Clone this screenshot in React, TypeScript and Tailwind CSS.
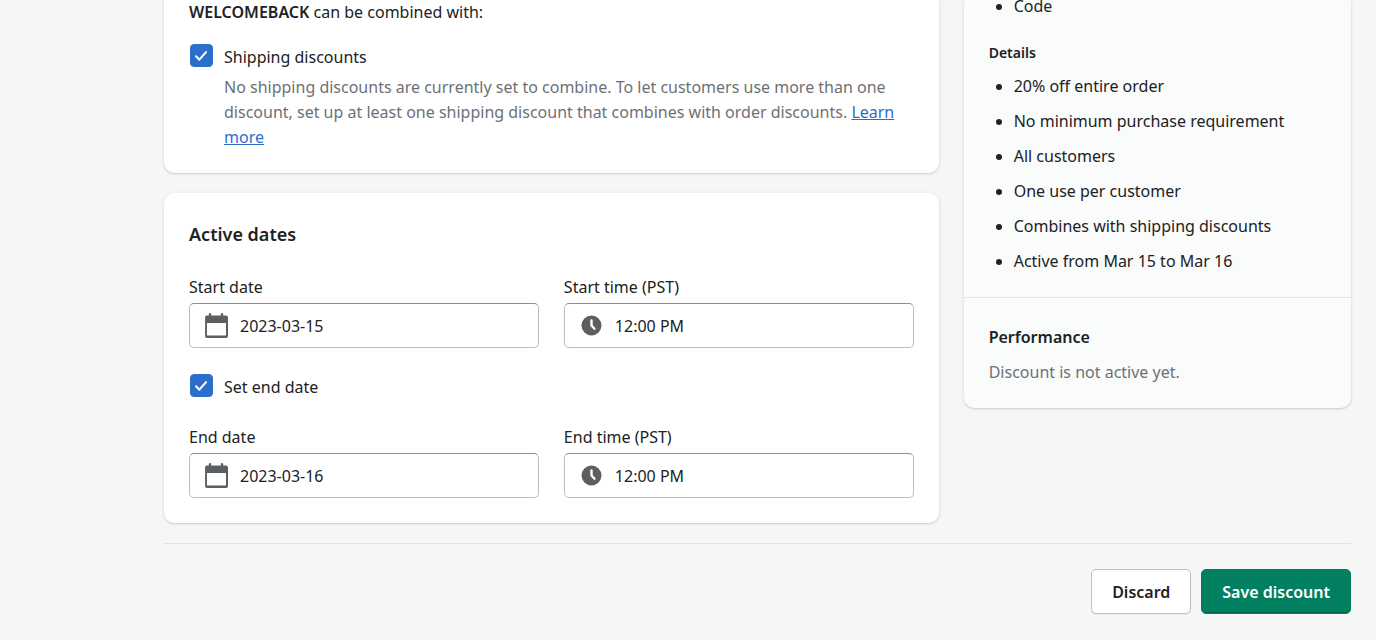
import React, { useState } from "react";

const details = [
  "20% off entire order",
  "No minimum purchase requirement",
  "All customers",
  "One use per customer",
  "Combines with shipping discounts",
  "Active from Mar 15 to Mar 16",
];

const cardShadow = "shadow-[0_0_5px_rgba(23,24,24,0.05),0_1px_2px_rgba(0,0,0,0.15)]";

function CalendarIcon() {
  return (
    <svg width="25" height="25" viewBox="0 0 25 25" fill="#5c5f62" aria-hidden="true">
      <path fillRule="evenodd" d="M6 0a1.2 1.2 0 0 1 1.2 1.2V2.4h9.6V1.2a1.2 1.2 0 0 1 2.4 0V2.4h2.9a1.9 1.9 0 0 1 1.9 1.9v18.8a1.9 1.9 0 0 1-1.9 1.9H3a1.9 1.9 0 0 1-1.9-1.9V4.3A1.9 1.9 0 0 1 3 2.4h1.8V1.2A1.2 1.2 0 0 1 6 0zM3 10v12.5h19V10z" />
    </svg>
  );
}

function ClockIcon() {
  return (
    <svg width="25" height="25" viewBox="0 0 25 25" aria-hidden="true">
      <circle cx="12.5" cy="12.5" r="10" fill="#5c5f62" />
      <path d="M12.5 7.5v5l3 3.2" fill="none" stroke="#fff" strokeWidth="2.4" strokeLinecap="round" strokeLinejoin="round" />
    </svg>
  );
}

function Checkbox({ id, label }: { id: string; label: string }) {
  const [checked, setChecked] = useState(true);
  return (
    <div className="flex items-start gap-[11px] pl-px">
      <span className="relative size-[23px] shrink-0">
        <input id={id} type="checkbox" checked={checked} onChange={() => setChecked(!checked)}
          className="block size-full appearance-none rounded border border-[#8c9196] bg-white checked:border-[#2c6ecb] checked:bg-[#2c6ecb]" />
        {checked && (
          <svg className="pointer-events-none absolute inset-0" width="23" height="23" viewBox="0 0 23 23" fill="none" aria-hidden="true">
            <path d="M6 12.2l3.4 3.5 6.6-7.6" stroke="#fff" strokeWidth="2" strokeLinecap="round" strokeLinejoin="round" />
          </svg>
        )}
      </span>
      <label htmlFor={id} className="pt-px">{label}</label>
    </div>
  );
}

function Field({ id, label, value, icon }: { id: string; label: string; value: string; icon: React.ReactNode }) {
  const [text, setText] = useState(value);
  return (
    <div className="flex min-w-0 flex-1 flex-col gap-[3px]">
      <label htmlFor={id}>{label}</label>
      <div className="flex h-[45px] items-center gap-[11px] rounded-[5px] border border-[#babfc3] border-t-[#898f94] bg-white px-3.5">
        <span className="shrink-0">{icon}</span>
        <input id={id} type="text" value={text} onChange={(e) => setText(e.target.value)}
          className="w-full min-w-0 bg-transparent pt-0.5 outline-none" />
      </div>
    </div>
  );
}

export default function App() {
  return (
    <div className="min-h-screen bg-[#f6f6f7] pr-[25px] pl-[164px] font-['Noto_Sans',sans-serif] text-[16px] leading-[25px] text-[#202223]">
      <div className="flex items-start gap-[25px]">
        <main className="flex min-w-0 flex-2 flex-col gap-5">
          <section className={`rounded-b-[10px] bg-white px-[25px] pb-[23px] ${cardShadow}`}>
            <p><b className="font-semibold">WELCOMEBACK</b> can be combined with:</p>
            <div className="mt-[19px]">
              <Checkbox id="shipping" label="Shipping discounts" />
              <p className="mt-[5px] pl-[35px] text-[#6d7175]">
                No shipping discounts are currently set to combine. To let customers use more than one
                discount, set up at least one shipping discount that combines with order discounts.{" "}
                <a href="#" className="text-[#2c6ecb] underline">Learn more</a>
              </p>
            </div>
          </section>

          <section className={`rounded-[10px] bg-white px-[25px] pt-[26px] pb-[25px] ${cardShadow}`}>
            <h2 className="text-[18px] leading-[30px] font-semibold">Active dates</h2>
            <div className="mt-[26px] flex gap-[25px]">
              <Field id="start-date" label="Start date" value="2023-03-15" icon={<CalendarIcon />} />
              <Field id="start-time" label="Start time (PST)" value="12:00 PM" icon={<ClockIcon />} />
            </div>
            <div className="mt-[26px] mb-[25px]">
              <Checkbox id="set-end" label="Set end date" />
            </div>
            <div className="flex gap-[25px]">
              <Field id="end-date" label="End date" value="2023-03-16" icon={<CalendarIcon />} />
              <Field id="end-time" label="End time (PST)" value="12:00 PM" icon={<ClockIcon />} />
            </div>
          </section>
        </main>

        <aside className={`min-w-0 flex-1 rounded-b-[10px] bg-[#fafbfb] ${cardShadow}`}>
          <div className="px-[25px] pb-[23px]">
            <ul className="-mt-1.5 list-disc pl-[25px]">
              <li>Code</li>
            </ul>
            <h3 className="mt-6 text-[14px] leading-5 font-semibold">Details</h3>
            <ul className="mt-[11px] flex list-disc flex-col gap-2.5 pl-[25px]">
              {details.map((item) => (
                <li key={item}>{item}</li>
              ))}
            </ul>
          </div>
          <div className="border-t border-[#e1e3e5] px-[25px] pt-[27px] pb-[23px]">
            <h3 className="font-semibold">Performance</h3>
            <p className="mt-2.5 text-[#6d7175]">Discount is not active yet.</p>
          </div>
        </aside>
      </div>

      <footer className="mt-5 flex justify-end gap-2.5 border-t border-[#e1e3e5] py-[25px]">
        <button type="button" className="h-[45px] rounded-[5px] border border-[#babfc3] bg-white px-5 pt-0.5 font-semibold shadow-[0_1px_0_rgba(0,0,0,0.05)]">Discard</button>
        <button type="button" className="h-[45px] rounded-[5px] border border-[#008060] bg-[#008060] px-5 pt-0.5 font-semibold text-white shadow-[inset_0_-1px_0_rgba(0,0,0,0.2)]">Save discount</button>
      </footer>
    </div>
  );
}
